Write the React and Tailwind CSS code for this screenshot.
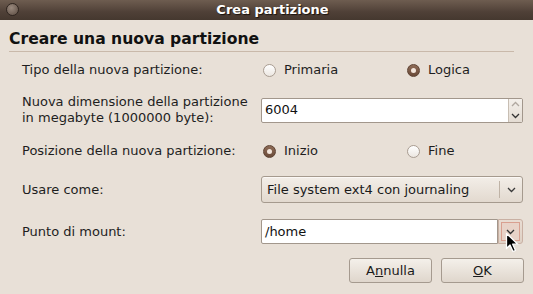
import React from "react";

const font = { fontFamily: '"DejaVu Sans", "Liberation Sans", sans-serif' };

function Radio({ checked }) {
  return checked ? (
    <span className="flex h-[13px] w-[13px] shrink-0 items-center justify-center rounded-full border border-[#5e4333] bg-[linear-gradient(#8e6c57,#6a4a38)]">
      <span className="h-[5px] w-[5px] rounded-full bg-[#f3e6dc]" />
    </span>
  ) : (
    <span className="h-[13px] w-[13px] shrink-0 rounded-full border border-[#a99d92] bg-[linear-gradient(#ffffff,#ece7e1)]" />
  );
}

function Chevron({ color = "#3c3c3c", up = false }) {
  return (
    <svg width="9" height="6" viewBox="0 0 9 6">
      <path
        d={up ? "M1 5 L4.5 1.5 L8 5" : "M1 1 L4.5 4.5 L8 1"}
        fill="none"
        stroke={color}
        strokeWidth="1.3"
      />
    </svg>
  );
}

function Label({ children }) {
  return (
    <div className="w-[261px] shrink-0 pl-[22px] text-[13px] leading-[16px] text-[#1e1e1e]">{children}</div>
  );
}

export default function App() {
  return (
    <div style={font} className="relative h-[294px] w-[533px] overflow-hidden bg-[#e8e0d7]">
      {/* title bar */}
      <div className="relative flex h-[20px] items-center justify-center bg-[linear-gradient(#6e5d50,#4f4037_60%,#45382f)]">
        <span className="absolute left-[6px] top-[3px] h-[13px] w-[13px] rounded-full border border-[#2e241e] bg-[radial-gradient(circle_at_40%_35%,#9a8a7e,#5a4a40)]" />
        <span className="ml-[12px] text-[13px] font-bold text-white [text-shadow:1px_1px_1px_#1a120c]">Crea partizione</span>
      </div>

      {/* heading */}
      <div className="px-[9px] pt-[10px]">
        <div className="text-[15.6px] font-bold leading-[18px] text-[#111]">Creare una nuova partizione</div>
        <div className="mr-[10px] mt-[3px] h-px bg-[#c9b9aa]" />
      </div>

      {/* row 1 */}
      <div className="mt-[6px] flex h-[24px] items-center">
        <Label>Tipo della nuova partizione:</Label>
        <div className="flex w-[262px] items-center text-[13px] text-[#1e1e1e]">
          <div className="flex w-[146px] items-center gap-[8px] pl-[2px]">
            <Radio />
            <span>Primaria</span>
          </div>
          <div className="flex items-center gap-[8px]">
            <Radio checked />
            <span>Logica</span>
          </div>
        </div>
      </div>

      {/* row 2 */}
      <div className="mt-[15px] flex h-[26px] items-center">
        <Label>
          Nuova dimensione della partizione
          <br />
          in megabyte (1000000 byte):
        </Label>
        <div className="flex h-[25px] w-[262px] overflow-hidden rounded-[2px] border border-[#a2978c] bg-white">
          <div className="flex flex-1 items-center pl-[3px] text-[13px] text-[#111]">6004</div>
          <div className="flex w-[14px] flex-col border-l border-[#c8beb3] bg-[linear-gradient(#f4f0eb,#e4dcd3)]">
            <div className="flex flex-1 items-center justify-center">
              <Chevron up color="#b0a8a0" />
            </div>
            <div className="flex flex-1 items-center justify-center">
              <Chevron color="#333" />
            </div>
          </div>
        </div>
      </div>

      {/* row 3 */}
      <div className="mt-[16px] flex h-[24px] items-center">
        <Label>Posizione della nuova partizione:</Label>
        <div className="flex w-[262px] items-center text-[13px] text-[#1e1e1e]">
          <div className="flex w-[146px] items-center gap-[8px] pl-[2px]">
            <Radio checked />
            <span>Inizio</span>
          </div>
          <div className="flex items-center gap-[8px]">
            <Radio />
            <span>Fine</span>
          </div>
        </div>
      </div>

      {/* row 4 */}
      <div className="mt-[13px] flex h-[27px] items-center">
        <Label>Usare come:</Label>
        <div className="flex h-[27px] w-[262px] items-center rounded-[3px] border border-[#a59a8e] bg-[linear-gradient(#f3eee8,#e2d9cf)] shadow-[inset_0_1px_0_#fbf8f5]">
          <div className="flex-1 pl-[5px] text-[13px] text-[#1a1a1a]">File system ext4 con journaling</div>
          <div className="h-[17px] w-px bg-[#bfb3a6]" />
          <div className="flex w-[22px] items-center justify-center">
            <Chevron color="#3a3a3a" />
          </div>
        </div>
      </div>

      {/* row 5 */}
      <div className="mt-[16px] flex h-[25px] items-center">
        <Label>Punto di mount:</Label>
        <div className="flex h-[25px] w-[262px]">
          <div className="flex flex-1 items-center rounded-l-[2px] border border-[#a2978c] bg-white pl-[3px] text-[13px] text-[#111]">
            /home
          </div>
          <div className="flex w-[25px] items-center justify-center rounded-r-[3px] border border-[#c9b0a3] bg-[linear-gradient(#e9ddd3,#dfd1c5)] p-[2px]">
            <div className="flex h-full w-full items-center justify-center border border-[#d9a090] bg-[#e8d3c8]">
              <Chevron color="#333" />
            </div>
          </div>
        </div>
      </div>

      {/* buttons */}
      <div className="mt-[14px] flex h-[25px] justify-end gap-[9px] pr-[9px]">
        <button className="flex h-[25px] w-[83px] items-center justify-center rounded-[3px] border border-[#a59a8f] bg-[linear-gradient(#f4f0ea,#dfd6cc)] text-[13px] text-[#1a1a1a]">
          A<span className="underline">n</span>nulla
        </button>
        <button className="flex h-[25px] w-[83px] items-center justify-center rounded-[3px] border border-[#a59a8f] bg-[linear-gradient(#f4f0ea,#dfd6cc)] text-[13px] text-[#1a1a1a]">
          <span className="underline">O</span>K
        </button>
      </div>

      {/* mouse cursor */}
      <svg className="absolute left-[505px] top-[232px]" width="15" height="21" viewBox="0 0 15 21">
        <path d="M1.5 1.5 L1.5 16.5 L5 13 L8 19.5 L10.5 18.5 L7.7 12.2 L12.8 12.2 Z" fill="#000" stroke="#fff" strokeWidth="1.3" strokeLinejoin="round" />
      </svg>
    </div>
  );
}
